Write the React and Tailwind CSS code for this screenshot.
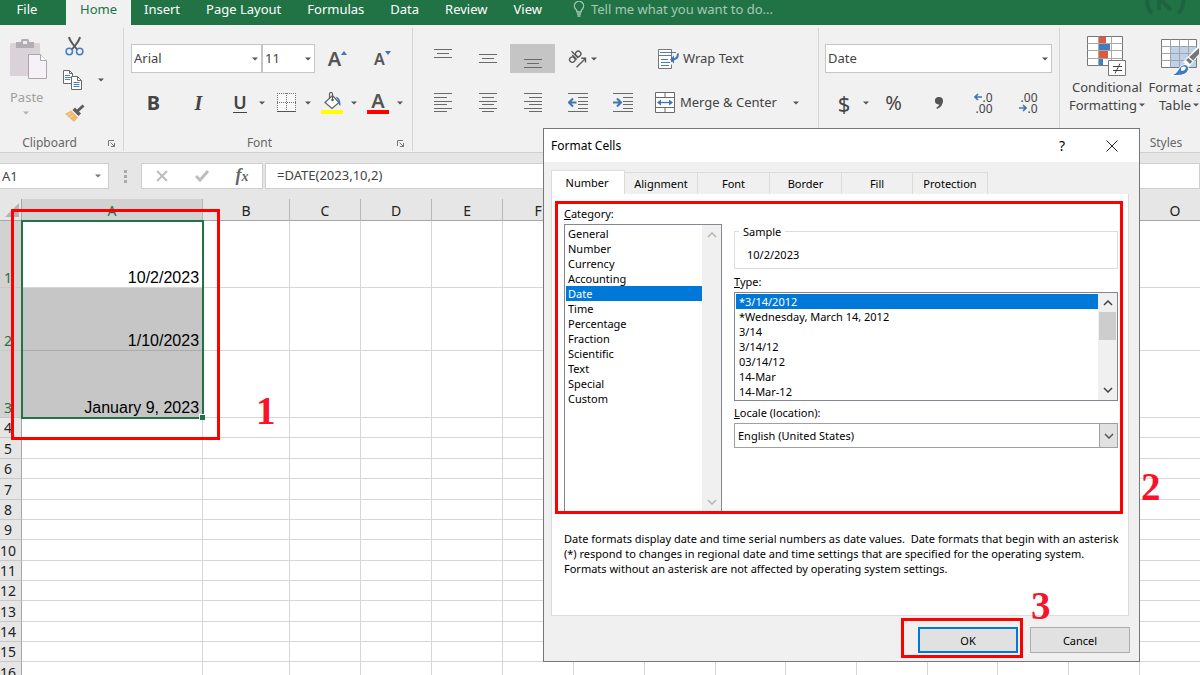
import React, { useState } from 'react';

const MENU_TABS = ['Insert', 'Page Layout', 'Formulas', 'Data', 'Review', 'View'];

const CATEGORIES = [
  'General', 'Number', 'Currency', 'Accounting', 'Date', 'Time',
  'Percentage', 'Fraction', 'Scientific', 'Text', 'Special', 'Custom',
];

const DATE_TYPES = ['*3/14/2012', '*Wednesday, March 14, 2012', '3/14', '3/14/12', '03/14/12', '14-Mar', '14-Mar-12'];

const DIALOG_TABS = [
  { name: 'Alignment', width: 'w-[73px]' },
  { name: 'Font', width: 'w-[72px]' },
  { name: 'Border', width: 'w-[72px]' },
  { name: 'Fill', width: 'w-[71px]' },
  { name: 'Protection', width: 'w-[75px]' },
];

const COLUMNS = [
  { name: 'A', width: 'w-[181px]' },
  { name: 'B', width: 'w-[87px]' },
  { name: 'C', width: 'w-[71px]' },
  { name: 'D', width: 'w-[71px]' },
  { name: 'E', width: 'w-[71px]' },
  { name: 'F', width: 'w-[71px]' },
  { name: 'G', width: 'w-[71px]' },
  { name: 'H', width: 'w-[71px]' },
  { name: 'I', width: 'w-[70px]' },
  { name: 'J', width: 'w-[71px]' },
  { name: 'K', width: 'w-[71px]' },
  { name: 'L', width: 'w-[70px]' },
  { name: 'M', width: 'w-[71px]' },
  { name: 'N', width: 'w-[71px]' },
  { name: 'O', width: 'w-[71px]' },
];

const ROWS = [
  { height: 'h-[67px]', value: '10/2/2023' },
  { height: 'h-[63px]', value: '1/10/2023' },
  { height: 'h-[67px]', value: 'January 9, 2023' },
  { height: 'h-[20px]' },
  { height: 'h-[21px]' },
  { height: 'h-[20px]' },
  { height: 'h-[21px]' },
  { height: 'h-[20px]' },
  { height: 'h-[20px]' },
  { height: 'h-[21px]' },
  { height: 'h-[20px]' },
  { height: 'h-[20px]' },
  { height: 'h-[21px]' },
  { height: 'h-[20px]' },
  { height: 'h-[20px]' },
  { height: 'h-[21px]' },
];

/* ===== Icons ===== */

const Caret = ({ className = 'text-[#555]' }) => (
  <svg className={`w-[6px] h-[4px] shrink-0 ${className}`} viewBox="0 0 6 4" fill="currentColor">
    <path d="M0 0.5h6L3 3.5z" />
  </svg>
);

const Lines = ({ rows }) => (
  <svg className="w-[18px] h-5" viewBox="0 0 18 20" stroke="#6a6a6a" shapeRendering="crispEdges">
    {rows.map(([x1, x2, y]) => (
      <path key={y} d={`M${x1} ${y}.5H${x2}`} />
    ))}
  </svg>
);

const PasteIcon = () => (
  <svg className="w-[37px] h-10" viewBox="0 0 37 40">
    <rect x="0" y="4" width="30" height="33" rx="1.5" fill="#d9d3d9" />
    <path d="M6 3h5V1.5Q11 0 12.500 0h5Q19 0 19 1.500V3h5v6H6z" fill="#b1adb1" />
    <rect x="13" y="2" width="4" height="3" fill="#efecef" />
    <path d="M18.500 15.500h12l6 6v18h-18z" fill="#f6f1f8" stroke="#a9a5a9" />
    <path d="M30.500 15.500v6h6" fill="#fff" stroke="#a9a5a9" />
  </svg>
);

const CutIcon = () => (
  <svg className="w-[19px] h-5" viewBox="0 0 19 20" fill="none">
    <path d="M4 1c.6 3 2.500 5.500 4.500 8l4 5M15 1c-.6 3-2.500 5.500-4.500 8l-4 5" stroke="#5a5a5a" strokeWidth="2" />
    <circle cx="4.300" cy="15.500" r="3.200" stroke="#4a7ebb" strokeWidth="1.500" />
    <circle cx="14.700" cy="15.500" r="3.200" stroke="#4a7ebb" strokeWidth="1.500" />
  </svg>
);

const CopyIcon = () => (
  <svg className="w-[19px] h-5" viewBox="0 0 19 20">
    <path d="M.5.5h6l3 3v10h-9z" fill="#fff" stroke="#6a6a6a" />
    <path d="M6.500.5v3h3" fill="none" stroke="#6a6a6a" />
    <path d="M2 5.500h5M2 7.500h6M2 9.500h5" stroke="#4a7ebb" />
    <path d="M8.500 6.500h6l4 4v9h-10z" fill="#fff" stroke="#6a6a6a" />
    <path d="M14.500 6.500v4h4" fill="none" stroke="#6a6a6a" />
    <path d="M10.500 12.500h6M10.500 14.500h6M10.500 16.500h6" stroke="#4a7ebb" />
  </svg>
);

const PainterIcon = () => (
  <svg className="w-[20px] h-[18px]" viewBox="0 0 20 18">
    <path d="M0 10l6-3.500 7 7-4 4.500z" fill="#ecb96e" />
    <path d="M2 11.500l4-2M4.500 13.500l4-2" stroke="#f6d7a5" />
    <path d="M7.500 6l6 6 2.500-2.500-2-2L19.500 2.500 17.500.5l-5.500 5-2-2z" fill="#5d5d5d" />
  </svg>
);

const BordersIcon = () => (
  <svg className="w-[19px] h-[19px]" viewBox="0 0 19 19" fill="none" stroke="#777">
    <path d="M1 1h17v17H1z" stroke="none" fill="#fff" fillOpacity=".6" />
    <path d="M.5 0v18M9.500 0v18M18.500 0v18M0 .5h19M0 9.500h19" strokeDasharray="1 1" />
    <path d="M0 18.500h19" stroke="#555" />
  </svg>
);

const BucketIcon = () => (
  <svg className="w-[22px] h-[22px]" viewBox="0 0 22 22" fill="none">
    <path d="M4 10.500l7.500-7 6.500 7-7 6z" fill="#fff" stroke="#5f5f5f" strokeWidth="1.200" />
    <path d="M8.500 6V2q0-1.500 1.500-1.500T11.500 2v6" stroke="#5f5f5f" strokeWidth="1.200" />
    <circle cx="11.500" cy="8" r="1.300" fill="#5f5f5f" />
    <path d="M14.500 4.500q5.500 1 5 9.500-3-2-2-5z" fill="#3f74b5" />
    <path d="M0 18h22v4H0z" fill="#ff0" />
  </svg>
);

const OrientIcon = () => (
  <svg className="w-[19px] h-[18px]" viewBox="0 0 19 18" fill="none" stroke="#5a5a5a" strokeWidth="1.400">
    <g transform="rotate(-45 7 7)">
      <circle cx="3.200" cy="7" r="2.700" />
      <path d="M6.400 3.700v6.300M8.600 .5v9.500" />
      <circle cx="11.500" cy="7" r="2.700" />
    </g>
    <path d="M8.500 17.200L17 9M13.200 8.200h4.300v4.300" />
  </svg>
);

const WrapIcon = () => (
  <svg className="w-[21px] h-5" viewBox="0 0 21 20" fill="none">
    <path d="M.5.5h13v6H.5zM.5 6.500h13v6.500M.5 6.500v13h13v-4" fill="#fff" stroke="#777" />
    <path d="M2 3.500h16M3 10.500h7M3 13.500h9M3 16.500h8" stroke="#4a7ebb" />
    <path d="M20 4.500q0 6-6 6" stroke="#3f74b5" strokeWidth="2" />
    <path d="M16 6.500l-4 4 4 4z" fill="#3f74b5" />
  </svg>
);

const MergeIcon = () => (
  <svg className="w-5 h-[21px]" viewBox="0 0 20 21" fill="none">
    <path d="M.5.5h19v20H.5z" fill="#fff" stroke="#6a6a6a" />
    <path d="M.5 5.500h19M.5 15.500h19M10 .5v5M10 15.500v5" stroke="#6a6a6a" />
    <path d="M3 10.500h14" stroke="#3f74b5" strokeWidth="1.300" />
    <path d="M2 10.500l4-3v6zM18 10.500l-4-3v6z" fill="#3f74b5" />
  </svg>
);

const IndentIcon = ({ right }) => (
  <svg className="w-5 h-5" viewBox="0 0 20 20" fill="none">
    <path d="M0 .5h20M10 4.500h10M10 8.500h10M10 11.500h10M10 15.500h10M0 18.500h20" stroke="#6a6a6a" />
    {right ? (
      <path d="M0 9.500h7M4 5.500l4 4-4 4" stroke="#3f74b5" strokeWidth="2" />
    ) : (
      <path d="M8.500 9.500H2M5 5.500l-4 4 4 4" stroke="#3f74b5" strokeWidth="2" />
    )}
  </svg>
);

const SmallArrow = ({ right }) => (
  <svg className="w-2 h-2" viewBox="0 0 8 8" fill="none" stroke="#3f74b5" strokeWidth="1.600">
    {right ? <path d="M0 4h7M4 1l3 3-3 3" /> : <path d="M8 4H1M4 1L1 4l3 3" />}
  </svg>
);

const ConditionalIcon = () => (
  <svg className="w-10 h-10" viewBox="0 0 40 40" fill="none">
    <path d="M.5.5h35v29H.5z" fill="#fff" stroke="#777" />
    <path d="M.5 7.500h35M.5 14.500h35M.5 22.500h35M11.500.5v29M24.500.5v29" stroke="#a8a8a8" />
    <path d="M12 1h7v6h-7zM12 15h9v7h-9z" fill="#de5a3c" />
    <path d="M12 8h11v6H12zM12 23h4v6h-4z" fill="#3f7cc0" />
    <path d="M21.500 24.500h17v15h-17z" fill="#fff" stroke="#777" />
    <path d="M26 30.500h9M26 34.500h9M33 27.500l-5 10" stroke="#444" />
  </svg>
);

const FormatTableIcon = () => (
  <svg className="w-10 h-10" viewBox="0 0 40 40" fill="none">
    <path d="M2.500 3.500h35v28h-35z" fill="#fff" stroke="#777" />
    <path d="M12 11h25v20H12z" fill="#bdd2ea" />
    <path d="M2.500 10.500h35M2.500 17.500h35M2.500 24.500h35M11.500 3.500v28M20.500 3.500v28M29.500 3.500v28" stroke="#a3a3a3" />
    <path d="M40 9v10L30 31l-6-5z" fill="#fff" />
    <path d="M40 12v6L31 28l-4-4z" fill="#777" />
    <path d="M29 21l5 4" stroke="#fff" strokeWidth="1.500" />
    <path d="M12 39.500q6-2 8-7 2-4 6-4 4 1 3.500 5-1.500 6-11 6z" fill="#3f7cc0" stroke="#fff" />
    <path d="M22 31.500q3-2 5 0-1 4-5 3z" fill="#fff" />
  </svg>
);

const Launcher = () => (
  <button type="button" aria-label="More options" className="w-6 h-4 flex items-center justify-center">
    <svg className="w-[7px] h-[7px]" viewBox="0 0 7 7" fill="none" stroke="#777">
      <path d="M.5 6V.5H6M2.500 2.500l4 4M6.500 3v3.500H3" />
    </svg>
  </button>
);

const Chevron = ({ up, className = 'text-[#444]' }) => (
  <svg className={`w-[10px] h-[6px] ${className}`} viewBox="0 0 10 6" fill="none" stroke="currentColor" strokeWidth="1.500">
    <path d={up ? 'M1 5l4-4 4 4' : 'M1 1l4 4 4-4'} />
  </svg>
);

/* ===== Ribbon parts ===== */

const Group = ({ label, width, launcher, children }) => (
  <section className={`flex flex-col shrink-0 pt-[16px] border-r border-[#d5d5d5] ${width}`}>
    <div className="flex flex-col gap-[15px] h-[91px] shrink-0">{children}</div>
    <div className="flex items-center h-4">
      <span className="flex-1 text-center text-xs leading-4 text-[#666]">{label}</span>
      {launcher && <Launcher />}
    </div>
  </section>
);

const Row = ({ children }) => <div className="flex items-center h-[29px]">{children}</div>;

const Tool = ({ label, active, children }) => (
  <button type="button" aria-label={label} className={`w-[45px] h-[29px] flex items-center justify-center ${active ? 'bg-[#c5c5c5]' : ''}`}>
    {children}
  </button>
);

const SplitTool = ({ label, children }) => (
  <button type="button" aria-label={label} className="w-[46px] h-[29px] flex items-center">
    <span className="w-[38px] flex justify-center">{children}</span>
    <Caret />
  </button>
);

const Combo = ({ label, value, width }) => (
  <div className={`relative h-[29px] ${width}`}>
    <select aria-label={label} defaultValue={value} className="appearance-none w-full h-full bg-white border border-[#c6c6c6] px-[2px] text-[13px] text-[#444]">
      <option>{value}</option>
    </select>
    <span className="absolute right-1 inset-y-0 flex items-center pointer-events-none">
      <Caret />
    </span>
  </div>
);

const Ribbon = () => (
  <div className="flex h-[128px] bg-[#f1f1f1] border-b border-[#d0d0d0] pt-[3px] pb-px text-[#444] overflow-hidden">
    <Group label="Clipboard" width="w-[124px]" launcher>
      <div className="flex -mt-2">
        <button type="button" className="w-[55px] pl-[10px] pt-[3px] flex flex-col items-start text-[#a0a0a0]">
          <PasteIcon />
          <span className="w-8 mt-2 text-[13px] leading-5 text-center">Paste</span>
          <span className="w-8 mt-1 flex justify-center"><Caret className="text-[#b0b0b0]" /></span>
        </button>
        <div className="flex flex-col gap-[14px] pl-2">
          <button type="button" aria-label="Cut" className="flex pl-[2px]"><CutIcon /></button>
          <button type="button" aria-label="Copy" className="flex items-center gap-4"><CopyIcon /><Caret /></button>
          <button type="button" aria-label="Format Painter" className="flex pl-[2px]"><PainterIcon /></button>
        </div>
      </div>
    </Group>

    <Group label="Font" width="w-[289px] pl-[7px]" launcher>
      <Row>
        <Combo label="Font name" value="Arial" width="w-[131px]" />
        <Combo label="Font size" value="11" width="w-[53px]" />
        <Tool label="Increase font size">
          <span className="text-xl font-semibold leading-6 text-[#555]">A</span>
          <svg className="w-[6px] h-4" viewBox="0 0 6 16"><path d="M0 4h6L3 0z" fill="#3f74b5" /></svg>
        </Tool>
        <Tool label="Decrease font size">
          <span className="text-base font-semibold leading-6 text-[#555]">A</span>
          <svg className="w-[6px] h-4" viewBox="0 0 6 16"><path d="M0 0h6L3 4z" fill="#3f74b5" /></svg>
        </Tool>
      </Row>
      <Row>
        <Tool label="Bold"><b className="text-xl">B</b></Tool>
        <Tool label="Italic"><i className="text-xl font-bold font-['Liberation_Serif',serif]">I</i></Tool>
        <SplitTool label="Underline"><span className="text-lg font-semibold leading-5 border-b border-[#444]">U</span></SplitTool>
        <SplitTool label="Borders"><BordersIcon /></SplitTool>
        <SplitTool label="Fill color"><BucketIcon /></SplitTool>
        <SplitTool label="Font color">
          <span className="w-[22px] h-[22px] text-xl font-semibold leading-[18px] text-[#555] border-b-4 border-[#f00] text-center">A</span>
        </SplitTool>
      </Row>
    </Group>

    <Group label="" width="w-[406px] pl-[7px]">
      <Row>
        <Tool label="Top align"><Lines rows={[[0, 18, 0], [3, 15, 4], [0, 18, 8]]} /></Tool>
        <Tool label="Middle align"><Lines rows={[[0, 18, 5], [3, 15, 9], [0, 18, 13]]} /></Tool>
        <Tool label="Bottom align" active><Lines rows={[[0, 18, 10], [3, 15, 14], [0, 18, 18]]} /></Tool>
        <button type="button" aria-label="Orientation" className="w-[90px] pl-[13px] flex items-center gap-1"><OrientIcon /><Caret /></button>
        <button type="button" className="ml-[13px] flex items-center gap-1 text-[13px]"><WrapIcon />Wrap Text</button>
      </Row>
      <Row>
        <Tool label="Align left"><Lines rows={[[0, 18, 0], [0, 13, 4], [0, 18, 8], [0, 13, 11], [0, 18, 15], [0, 13, 18]]} /></Tool>
        <Tool label="Center"><Lines rows={[[0, 18, 0], [3, 15, 4], [0, 18, 8], [3, 15, 11], [0, 18, 15], [3, 15, 18]]} /></Tool>
        <Tool label="Align right"><Lines rows={[[0, 18, 0], [5, 18, 4], [0, 18, 8], [5, 18, 11], [0, 18, 15], [5, 18, 18]]} /></Tool>
        <Tool label="Decrease indent"><IndentIcon /></Tool>
        <Tool label="Increase indent"><IndentIcon right /></Tool>
        <button type="button" className="ml-[10px] flex items-center text-[13px]">
          <MergeIcon />
          <span className="ml-[5px] mr-4">Merge &amp; Center</span>
          <Caret />
        </button>
      </Row>
    </Group>

    <Group label="Number" width="w-[241px] pl-[6px]" launcher>
      <Row><Combo label="Number format" value="Date" width="w-[227px]" /></Row>
      <Row>
        <SplitTool label="Accounting format"><span className="text-[22px] leading-7">$</span></SplitTool>
        <Tool label="Percent style"><span className="text-xl">%</span></Tool>
        <Tool label="Comma style">
          <svg className="w-2 h-3" viewBox="0 0 8 12"><path d="M4 0a4 4 0 014 4q0 5-6 8l-.6-1.200Q4 9 4.500 7.500A3.800 3.800 0 114 0z" fill="#555" /></svg>
        </Tool>
        <Tool label="Increase decimal">
          <span className="flex flex-col items-end text-xs leading-[11px]">
            <span className="flex items-center"><SmallArrow />.0</span>
            <span>.00</span>
          </span>
        </Tool>
        <Tool label="Decrease decimal">
          <span className="flex flex-col items-end text-xs leading-[11px]">
            <span>.00</span>
            <span className="flex items-center"><SmallArrow right />.0</span>
          </span>
        </Tool>
      </Row>
    </Group>

    <Group label="Styles" width="w-[213px]">
      <div className="flex -mt-2 pl-[6px] text-[13px] leading-[18px]">
        <button type="button" className="w-[82px] flex flex-col items-center">
          <ConditionalIcon />
          <span className="mt-[2px]">Conditional</span>
          <span className="flex items-center gap-[2px]">Formatting<Caret /></span>
        </button>
        <button type="button" className="w-[62px] flex flex-col items-center whitespace-nowrap">
          <FormatTableIcon />
          <span className="mt-[2px]">Format as</span>
          <span className="flex items-center gap-[2px]">Table<Caret /></span>
        </button>
      </div>
    </Group>
  </div>
);

const MenuBar = () => (
  <header className="flex h-[25px] bg-[#217346] text-[13px] leading-4 text-white overflow-hidden">
    <button type="button" className="w-[66px] pr-3 pb-2">File</button>
    <button type="button" className="px-[14px] pb-2 bg-[#f1f1f1] text-[#217346]">Home</button>
    {MENU_TABS.map((tab) => (
      <button type="button" key={tab} className="px-[13px] pb-2 whitespace-nowrap">{tab}</button>
    ))}
    <label className="flex items-center flex-1 pl-[18px] pb-2 text-[#a6c9b5]">
      <svg className="w-3 h-4 mr-[6px] shrink-0" viewBox="0 0 12 16" fill="none" stroke="currentColor" strokeWidth="1.300">
        <path d="M4 11Q4 9 2.400 7.800A4.600 4.600 0 119.600 7.800Q8 9 8 11zM4 13h4M4.500 15h3" />
      </svg>
      <input aria-label="Tell me" placeholder="Tell me what you want to do..." className="w-full bg-transparent placeholder-[#a6c9b5] outline-none" />
    </label>
    <svg className="w-12 h-4 mr-[9px] shrink-0" viewBox="0 0 48 16" fill="none" stroke="#1d6340" strokeWidth="4">
      <path d="M5 -6Q2 6 9 13M39 -6q4 12-4 19M16 -4V10M28 10L19 1l6-6" />
    </svg>
  </header>
);

const FormulaBar = () => (
  <div className="flex items-stretch h-[46px] pt-[10px] pb-[10px] bg-[#e6e6e6] text-[13px] text-[#444]">
    <div className="relative w-[109px]">
      <input aria-label="Name box" defaultValue="A1" className="w-full h-full bg-white border border-l-0 border-[#cfcfcf] pl-[2px] outline-none" />
      <span className="absolute right-[8px] inset-y-0 flex items-center"><Caret className="text-[#777]" /></span>
    </div>
    <svg className="w-8 h-[26px]" viewBox="0 0 32 26" fill="#aaa">
      <path d="M15 7h3v3h-3zM15 12h3v3h-3zM15 17h3v3h-3z" />
    </svg>
    <div className="flex items-center w-[122px] bg-white border border-[#cfcfcf]">
      <button type="button" aria-label="Cancel entry" className="flex-1 flex justify-center">
        <svg className="w-3 h-3" viewBox="0 0 12 12" stroke="#bdbdbd" strokeWidth="2"><path d="M1 1l10 10M11 1L1 11" /></svg>
      </button>
      <button type="button" aria-label="Enter" className="flex-1 flex justify-center">
        <svg className="w-[14px] h-3" viewBox="0 0 14 12" fill="none" stroke="#bdbdbd" strokeWidth="3"><path d="M1 6l4 4 8-9" /></svg>
      </button>
      <button type="button" aria-label="Insert function" className="flex-1 text-lg leading-5 italic font-bold text-[#666] font-['Liberation_Serif',serif]">
        f<span className="text-sm">x</span>
      </button>
    </div>
    <input aria-label="Formula" defaultValue="=DATE(2023,10,2)" className="flex-1 min-w-0 ml-[2px] bg-white border border-[#cfcfcf] px-[11px] outline-none" />
  </div>
);

const Sheet = () => (
  <table className="table-fixed w-max border-separate border-spacing-0 bg-white text-sm leading-[18px] text-[#222]">
    <colgroup>
      <col className="w-[22px]" />
      {COLUMNS.map((col) => <col key={col.name} className={col.width} />)}
    </colgroup>
    <thead>
      <tr className="h-[22px] bg-[#e6e6e6]">
        <th aria-label="Select all" className="p-0 border-r border-b border-[#a6a6a6]">
          <svg className="w-[14px] h-[14px] ml-[5px]" viewBox="0 0 14 14" fill="#b4b4b4"><path d="M14 0v14H0z" /></svg>
        </th>
        {COLUMNS.map((col, index) => (
          <th key={col.name} className={`p-0 pt-[2px] font-normal border-r border-b border-r-[#b8b8b8] border-b-[#a6a6a6] ${index === 0 ? 'bg-[#d2d2d2] text-[#217346]' : ''}`}>
            {col.name}
          </th>
        ))}
      </tr>
    </thead>
    <tbody>
      {ROWS.map((row, index) => (
        <tr key={index} className={row.height}>
          <th className={`p-0 pr-[5px] align-bottom font-normal border-r border-b border-r-[#a6a6a6] border-b-[#c8c8c8] ${row.value ? 'bg-[#d2d2d2] text-[#217346]' : 'bg-[#e6e6e6]'}`}>
            {index + 1}
          </th>
          {COLUMNS.map((col, colIndex) => (
            <td
              key={col.name}
              className={`p-0 pr-[3px] align-bottom text-right text-base leading-[18px] text-black border-r border-b border-[#d6d6d6] font-['Liberation_Sans',sans-serif] ${colIndex === 0 && (index === 1 || index === 2) ? 'bg-[#c6c6c6] border-b-[#ababab]' : ''}`}
            >
              {colIndex === 0 ? row.value : null}
            </td>
          ))}
        </tr>
      ))}
    </tbody>
  </table>
);

/* ===== Format Cells dialog ===== */

const FormatCellsDialog = () => {
  const [category, setCategory] = useState('Date');
  const [type, setType] = useState(DATE_TYPES[0]);

  return (
    <div role="dialog" aria-label="Format Cells" className="absolute left-[543px] top-[128px] w-[597px] bg-[#f0f0f0] border border-[#777] text-[11px] leading-[15px] text-black">
      <div className="flex items-center h-[33px] pl-[7px] pr-[21px] bg-white">
        <h2 className="flex-1 text-xs">Format Cells</h2>
        <button type="button" aria-label="Help" className="w-5 mr-[34px] text-sm">?</button>
        <button type="button" aria-label="Close">
          <svg className="w-3 h-3" viewBox="0 0 12 12" stroke="#222"><path d="M.5.5l11 11M11.500.5l-11 11" /></svg>
        </button>
      </div>

      <div className="pl-[7px] pr-[9px] pt-2">
        <div className="flex items-end">
          <button type="button" className="w-[74px] h-[24px] pr-[2px] bg-white border border-b-0 border-[#dcdcdc]">Number</button>
          {DIALOG_TABS.map((tab) => (
            <button type="button" key={tab.name} className={`h-[22px] border-t border-r border-[#dcdcdc] ${tab.width}`}>{tab.name}</button>
          ))}
        </div>

        <div className="mr-px h-[422px] bg-white border border-[#dcdcdc] border-t-0 pl-3 pr-[10px] pt-3">
          <div className="flex gap-3">
            <div className="w-[158px] flex flex-col">
              <span id="category-label"><span className="underline">C</span>ategory:</span>
              <div className="flex mt-[3px] h-[289px] border border-[#828790]">
                <ul role="listbox" aria-labelledby="category-label" className="flex-1 pl-px pt-px">
                  {CATEGORIES.map((name) => (
                    <li
                      key={name}
                      role="option"
                      aria-selected={name === category}
                      onClick={() => setCategory(name)}
                      className={`pl-[2px] ${name === category ? 'bg-[#0078d7] text-white' : ''}`}
                    >
                      {name}
                    </li>
                  ))}
                </ul>
                <div className="w-[19px] flex flex-col justify-between items-center py-[7px] bg-[#f0f0f0]">
                  <Chevron up className="text-[#b5b5b5]" />
                  <Chevron className="text-[#b5b5b5]" />
                </div>
              </div>
            </div>

            <div className="flex-1 flex flex-col">
              <fieldset className="mt-[18px] h-[45px] border border-[#dcdcdc] px-3">
                <legend className="-ml-2 px-1">Sample</legend>
                <output className="block mt-2">10/2/2023</output>
              </fieldset>

              <span id="type-label" className="mt-[5px]"><span className="underline">T</span>ype:</span>
              <div className="flex mt-[3px] h-[109px] border border-[#828790]">
                <ul role="listbox" aria-labelledby="type-label" className="flex-1 pl-px pt-px">
                  {DATE_TYPES.map((name) => (
                    <li
                      key={name}
                      role="option"
                      aria-selected={name === type}
                      onClick={() => setType(name)}
                      className={`pl-[3px] ${name === type ? 'bg-[#0078d7] text-white' : ''}`}
                    >
                      {name}
                    </li>
                  ))}
                </ul>
                <div className="w-[19px] flex flex-col items-center py-[7px] bg-[#f0f0f0]">
                  <Chevron up />
                  <div className="w-[17px] h-7 mt-[6px] mb-auto bg-[#cdcdcd]"></div>
                  <Chevron />
                </div>
              </div>

              <label htmlFor="locale" className="mt-1"><span className="underline">L</span>ocale (location):</label>
              <div className="relative mt-[3px] h-[25px]">
                <select id="locale" className="appearance-none w-full h-full bg-white border border-[#a0a0a0] px-[3px]">
                  <option>English (United States)</option>
                </select>
                <span className="absolute right-0 inset-y-0 w-[19px] flex items-center justify-center bg-[#e1e1e1] border border-[#a0a0a0] pointer-events-none">
                  <Chevron className="text-[#555]" />
                </span>
              </div>
            </div>
          </div>

          <p className="mt-[18px] whitespace-nowrap">
            Date formats display date and time serial numbers as date values.&nbsp; Date formats that begin with an asterisk<br />
            (*) respond to changes in regional date and time settings that are specified for the operating system.<br />
            Formats without an asterisk are not affected by operating system settings.
          </p>
        </div>

        <div className="flex justify-end gap-3 pt-[11px] pb-2">
          <button type="button" className="w-[100px] h-[26px] bg-[#e1e1e1] border-2 border-[#0078d7]">OK</button>
          <button type="button" className="w-[100px] h-[26px] bg-[#e1e1e1] border border-[#adadad]">Cancel</button>
        </div>
      </div>
    </div>
  );
};

const StepNumber = ({ children, place }) => (
  <span className={`absolute text-[39px] leading-none font-bold text-[#f8132a] font-['Liberation_Serif',serif] ${place}`}>{children}</span>
);

const App = () => (
  <div className="relative h-screen overflow-hidden bg-white font-['Noto_Sans',sans-serif]">
    <MenuBar />
    <Ribbon />
    <FormulaBar />
    <main className="relative">
      <Sheet />
      {/* selection frame with its fill handle */}
      <div className="absolute left-[21px] top-[21px] w-[183px] h-[199px] border-2 border-[#217346] pointer-events-none">
        <span className="absolute -right-[3px] -bottom-[3px] w-[6px] h-[6px] bg-[#217346] border-t border-l border-white"></span>
      </div>
    </main>
    <FormatCellsDialog />

    {/* numbered steps */}
    <div className="absolute left-[11px] top-[209px] w-[209px] h-[231px] border-3 border-[#f00] pointer-events-none"></div>
    <div className="absolute left-[555px] top-[201px] w-[568px] h-[313px] border-3 border-[#f00] pointer-events-none"></div>
    <div className="absolute left-[901px] top-[618px] w-[122px] h-[40px] border-3 border-[#f00] pointer-events-none"></div>
    <StepNumber place="left-[256px] top-[391px]">1</StepNumber>
    <StepNumber place="left-[1141px] top-[467px]">2</StepNumber>
    <StepNumber place="left-[1031px] top-[586px]">3</StepNumber>
  </div>
);

export default App;
